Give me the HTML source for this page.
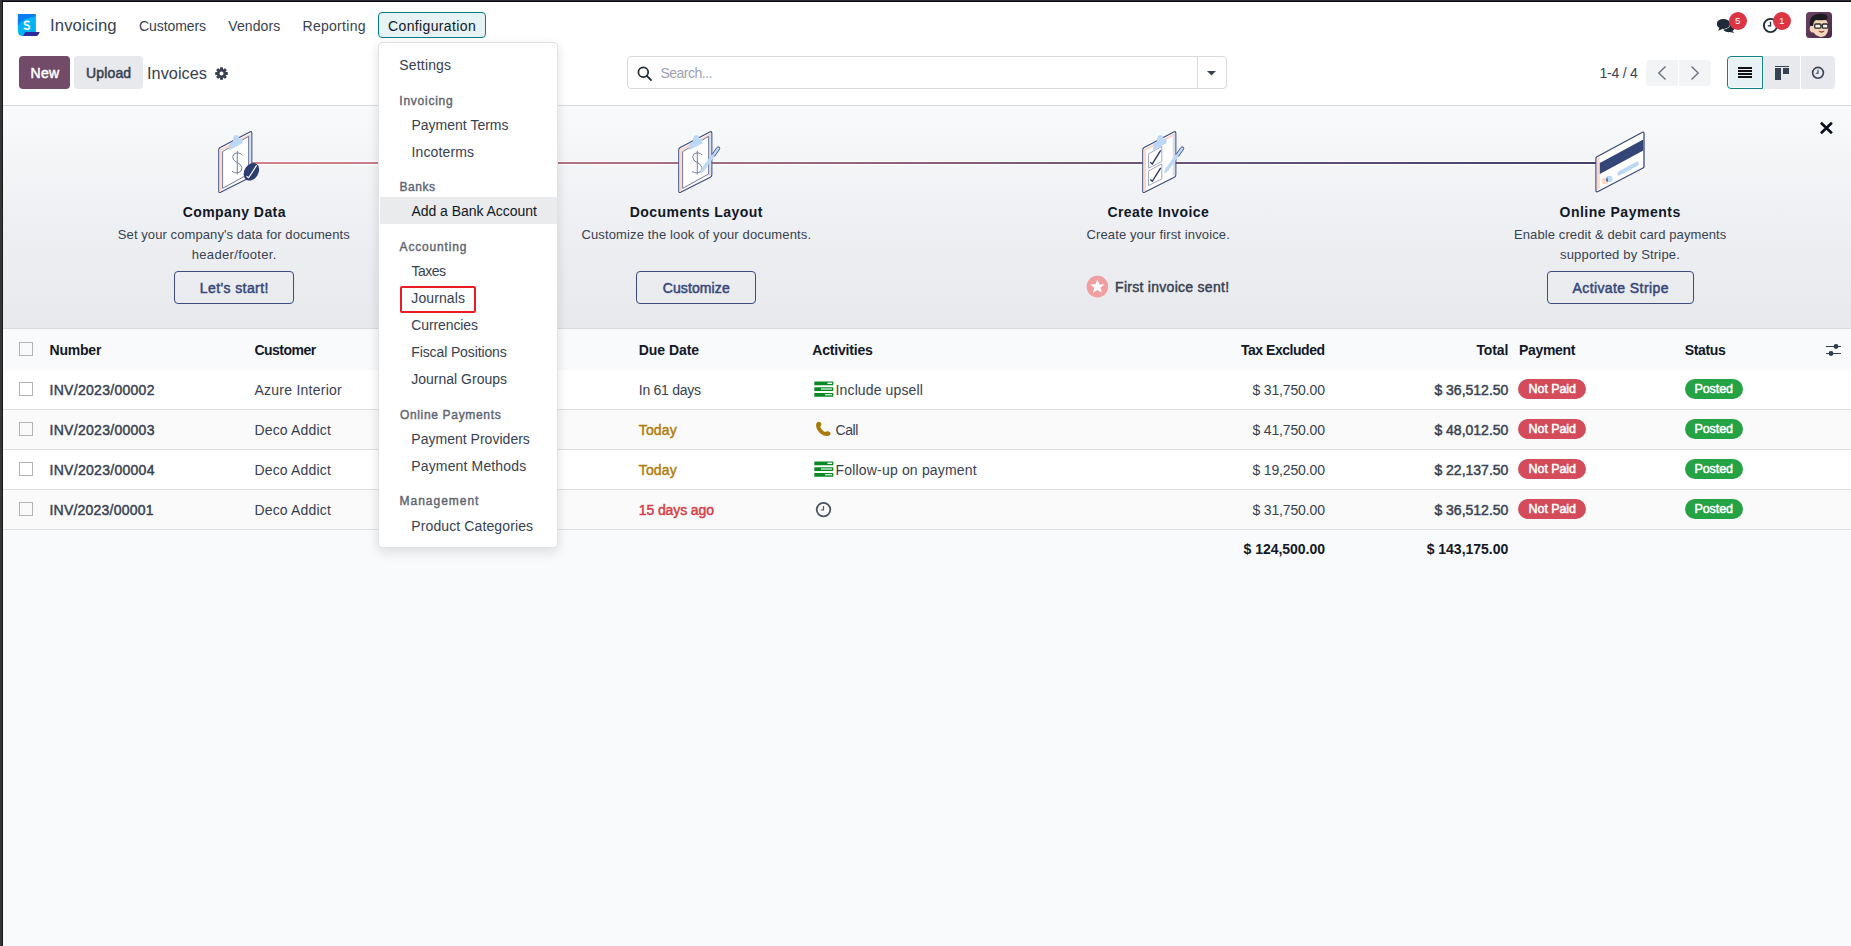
<!DOCTYPE html>
<html><head><meta charset="utf-8"><title>Invoices</title>
<style>
html,body{margin:0;padding:0;}
body{width:1851px;height:946px;overflow:hidden;position:relative;background:#f9fafb;font-family:"Liberation Sans",sans-serif;}
.t{position:absolute;white-space:nowrap;}
.b{position:absolute;}
svg.b{overflow:visible;}
</style></head><body>
<div class="b" style="left:0px;top:0px;width:1851px;height:46px;background:#fff;"></div>
<div class="b" style="left:0px;top:46px;width:1851px;height:60px;background:#fff;"></div>
<div class="b" style="left:0px;top:105px;width:1851px;height:1px;background:#d8dadd;"></div>
<div class="b" style="left:3px;top:106px;width:1848px;height:222px;background:linear-gradient(180deg,#f9fafb 0%,#eff0f3 50%,#e8e9ed 100%);"></div>
<div class="b" style="left:3px;top:328px;width:1848px;height:1px;background:#d9dbe0;"></div>
<div class="b" style="left:3px;top:329px;width:1848px;height:41px;background:#f9fafb;"></div>
<div class="b" style="left:3px;top:370px;width:1848px;height:39px;background:#ffffff;"></div>
<div class="b" style="left:3px;top:409px;width:1848px;height:1px;background:#dee0e3;"></div>
<div class="b" style="left:3px;top:410px;width:1848px;height:39px;background:#fafafa;"></div>
<div class="b" style="left:3px;top:449px;width:1848px;height:1px;background:#dee0e3;"></div>
<div class="b" style="left:3px;top:450px;width:1848px;height:39px;background:#ffffff;"></div>
<div class="b" style="left:3px;top:489px;width:1848px;height:1px;background:#dee0e3;"></div>
<div class="b" style="left:3px;top:490px;width:1848px;height:39px;background:#fafafa;"></div>
<div class="b" style="left:3px;top:529px;width:1848px;height:1px;background:#dee0e3;"></div>
<div class="b" style="left:3px;top:530px;width:1848px;height:416px;background:#f9fafb;"></div>
<svg class="b" style="left:17px;top:13px;" width="24" height="24" viewBox="0 0 24 24">
<path d="M0.9 0.9 H17.6 Q18.9 0.9 18.9 2.2 V22.9 H5.9 Q0.9 22.9 0.9 17.9 Z" fill="#00b3f4"/>
<path d="M0.9 0.9 H17.6 Q18.9 0.9 18.9 2.2 V3.2 Q7 4 0.9 12.6 Z" fill="#0a7df2"/>
<path d="M8.2 19 H22.8 L21.3 21.8 Q20.7 22.9 19.5 22.9 H6.2 Z" fill="#2e2aa0"/>
<path d="M12.6 9.1 Q11.6 8.2 10 8.3 Q7.5 8.5 7.5 10.3 Q7.6 11.7 10 12.2 Q12.6 12.8 12.6 14.2 Q12.5 16.2 9.8 16.2 Q8 16.1 6.9 15.2" fill="none" stroke="#fff" stroke-width="1.7"/>
</svg>
<div class="t" style="left:50.10px;top:15px;font-size:16.7px;line-height:21px;color:#374151;letter-spacing:0.075px;">Invoicing</div>
<div class="t" style="left:139.00px;top:17px;font-size:14px;line-height:18px;color:#374151;letter-spacing:-0.088px;">Customers</div>
<div class="t" style="left:228.30px;top:17px;font-size:14px;line-height:18px;color:#374151;letter-spacing:0.100px;">Vendors</div>
<div class="t" style="left:302.50px;top:17px;font-size:14px;line-height:18px;color:#374151;letter-spacing:0.287px;">Reporting</div>
<div class="b" style="left:378px;top:12px;width:108px;height:26px;background:#e6f2f3;border:1px solid #017e84;border-radius:4px;box-sizing:border-box;"></div>
<div class="t" style="left:388.00px;top:17px;font-size:14px;line-height:18px;color:#111827;letter-spacing:0.367px;">Configuration</div>
<svg class="b" style="left:1712px;top:10px;" width="26" height="26" viewBox="0 0 26 26">
<ellipse cx="16.5" cy="17.6" rx="6.2" ry="4.6" fill="#1f2937"/>
<path d="M19.5 20 L22.2 23 L15.5 21.6 Z" fill="#1f2937"/>
<ellipse cx="11.4" cy="13.9" rx="7.1" ry="5.5" fill="#fff"/>
<path d="M6.5 17.2 L5.2 21.6 L12.5 19.3 Z" fill="#fff"/>
<ellipse cx="11.4" cy="13.9" rx="6.6" ry="5" fill="#1f2937"/>
<path d="M7.5 17.5 L6.2 20.8 L11.2 18.7 Z" fill="#1f2937"/>
</svg>
<div class="b" style="left:1729px;top:12px;width:18px;height:18px;background:#dc3545;border-radius:50%;"></div>
<div class="t" style="left:1734.95px;top:14px;font-size:9.8px;line-height:13px;color:#fff;">5</div>
<svg class="b" style="left:1762px;top:17px;" width="17" height="17" viewBox="0 0 17 17">
<circle cx="8.5" cy="8.5" r="6.6" fill="none" stroke="#1f2937" stroke-width="1.9"/>
<path d="M8.5 4.8 V8.8 H5.8" fill="none" stroke="#1f2937" stroke-width="1.3"/>
</svg>
<div class="b" style="left:1773px;top:12px;width:18px;height:18px;background:#dc3545;border-radius:50%;"></div>
<div class="t" style="left:1778.95px;top:14px;font-size:9.8px;line-height:13px;color:#fff;">1</div>
<svg class="b" style="left:1806px;top:12px;" width="26" height="26" viewBox="0 0 26 26">
<defs><linearGradient id="av" x1="0" y1="0" x2="1" y2="1"><stop offset="0" stop-color="#6b4265"/><stop offset="1" stop-color="#4a2a46"/></linearGradient></defs>
<rect x="0" y="0" width="26" height="26" rx="3.5" fill="url(#av)"/>
<path d="M7 9 Q13 6.5 20.5 8.5 Q22.8 12 22.3 16 Q22.5 20 19.5 23.5 Q16.5 25.5 13.5 24.8 Q9.5 23.8 7.5 20.5 Q5.5 21 4.2 19 Q3.2 16.5 4.2 14.5 Q5.3 13.2 6.8 14.3 Z" fill="#f5d5b8"/>
<path d="M3.6 12.5 Q3.2 6 8 3 Q13 0.6 18.5 2 Q21.8 3 21.6 5.5 Q21 8.5 18.5 8 Q13 8.6 10 8 Q7.5 9 7 14 L5.6 14 Q4 13.8 3.6 12.5 Z" fill="#1d1d21"/>
<rect x="8.7" y="12" width="6.2" height="4.2" rx="1" fill="#f4efe8" stroke="#2a2a2a" stroke-width="1.3"/>
<rect x="16.4" y="12" width="5.5" height="4.2" rx="1" fill="#f4efe8" stroke="#2a2a2a" stroke-width="1.3"/>
<path d="M14.9 13.5 H16.4" stroke="#2a2a2a" stroke-width="1"/>
<path d="M12.8 19.2 Q15.5 21.8 18.2 19.2 Q15.5 20 12.8 19.2 Z" fill="#a9474a" stroke="#8a3a3a" stroke-width="0.6"/>
</svg>
<div class="b" style="left:19px;top:56px;width:51px;height:33px;background:#714b67;border-radius:4px;"></div>
<div class="t" style="left:30.60px;top:64px;font-size:14px;line-height:18px;color:#fff;-webkit-text-stroke:0.5px #fff;letter-spacing:0.200px;">New</div>
<div class="b" style="left:74px;top:56px;width:69px;height:33px;background:#e7e9ed;border-radius:4px;"></div>
<div class="t" style="left:85.90px;top:64px;font-size:14px;line-height:18px;color:#374151;-webkit-text-stroke:0.5px #374151;letter-spacing:0.180px;">Upload</div>
<div class="t" style="left:147.00px;top:63px;font-size:16.3px;line-height:20px;color:#374151;letter-spacing:0.029px;">Invoices</div>
<svg class="b" style="left:215px;top:66.5px;" width="13" height="13" viewBox="0 0 13 13">
<g transform="translate(6.5 6.5)" fill="#374151">
<circle r="4.6"/>
<rect x="-1.5" y="-6.3" width="3" height="12.6" rx="0.6"/>
<rect x="-1.5" y="-6.3" width="3" height="12.6" rx="0.6" transform="rotate(45)"/>
<rect x="-1.5" y="-6.3" width="3" height="12.6" rx="0.6" transform="rotate(90)"/>
<rect x="-1.5" y="-6.3" width="3" height="12.6" rx="0.6" transform="rotate(135)"/>
</g>
<circle cx="6.5" cy="6.5" r="2" fill="#fff"/>
</svg>
<div class="b" style="left:627px;top:56px;width:600px;height:33px;background:#fff;border:1px solid #d8dadd;border-radius:4px;box-sizing:border-box;"></div>
<div class="b" style="left:1197px;top:57px;width:1px;height:31px;background:#d8dadd;"></div>
<svg class="b" style="left:637px;top:65.5px;" width="16" height="16" viewBox="0 0 16 16">
<circle cx="6.3" cy="6.3" r="4.9" fill="none" stroke="#1f2937" stroke-width="1.7"/>
<path d="M9.8 9.8 L14 14" stroke="#1f2937" stroke-width="1.8" stroke-linecap="round"/>
</svg>
<div class="t" style="left:660.50px;top:64px;font-size:14px;line-height:18px;color:#9ca3af;letter-spacing:-0.513px;">Search...</div>
<svg class="b" style="left:1206px;top:70px;" width="11" height="6" viewBox="0 0 11 6"><path d="M1 1 H10 L5.5 5.5 Z" fill="#374151"/></svg>
<div class="t" style="left:1599.50px;top:64px;font-size:14px;line-height:18px;color:#374151;letter-spacing:-0.233px;">1-4 / 4</div>
<div class="b" style="left:1646px;top:60px;width:32px;height:26px;background:#f3f4f6;border-radius:4px 0 0 4px;"></div>
<div class="b" style="left:1679px;top:60px;width:32px;height:26px;background:#f3f4f6;border-radius:0 4px 4px 0;"></div>
<svg class="b" style="left:1656px;top:65px;" width="12" height="16" viewBox="0 0 12 16"><path d="M9.5 1.5 L2.8 8 L9.5 14.5" fill="none" stroke="#6b7280" stroke-width="1.4"/></svg>
<svg class="b" style="left:1689px;top:65px;" width="12" height="16" viewBox="0 0 12 16"><path d="M2.5 1.5 L9.2 8 L2.5 14.5" fill="none" stroke="#6b7280" stroke-width="1.4"/></svg>
<div class="b" style="left:1727px;top:56px;width:36px;height:33px;background:#e6f2f3;border:1px solid #0b8389;border-radius:4px 0 0 4px;box-sizing:border-box;box-shadow:inset 0 0 0 1px #f4fafa;"></div>
<div class="b" style="left:1764px;top:56px;width:36px;height:33px;background:#e7e9ed;"></div>
<div class="b" style="left:1801px;top:56px;width:34px;height:33px;background:#e7e9ed;border-radius:0 4px 4px 0;"></div>
<svg class="b" style="left:1738px;top:66px;" width="14" height="13" viewBox="0 0 14 13">
<rect x="0" y="1" width="14" height="2" fill="#111"/>
<rect x="0" y="4" width="14" height="2" fill="#111"/>
<rect x="0" y="7" width="14" height="2" fill="#111"/>
<rect x="0" y="10" width="14" height="2" fill="#111"/>
</svg>
<svg class="b" style="left:1775px;top:66px;" width="15" height="14" viewBox="0 0 15 14">
<rect x="0" y="0" width="14" height="1" fill="#374151"/>
<rect x="0" y="2" width="6" height="12" fill="#374151"/>
<rect x="8" y="2" width="6" height="6" fill="#374151"/>
</svg>
<svg class="b" style="left:1811px;top:66px;" width="14" height="14" viewBox="0 0 14 14">
<circle cx="7" cy="6.8" r="5.4" fill="none" stroke="#374151" stroke-width="1.6"/>
<path d="M7 3.8 V7.2 H4.8" fill="none" stroke="#374151" stroke-width="1.1"/>
</svg>
<div class="b" style="left:234px;top:161px;width:1386px;height:4px;background:linear-gradient(90deg,#d5838a 0%,#a56a80 35%,#6e5478 65%,#3f416a 100%);border-top:1px solid #fff;border-bottom:1px solid #fff;box-sizing:border-box;"></div>
<svg class="b" style="left:218px;top:130px;" width="46" height="64" viewBox="0 0 46 64">
<path d="M0.8 19.6 Q0.8 18.1 2.2 17.4 L31.8 1.9 Q33.8 0.9 33.8 3.1 V45 Q33.8 46.5 32.3 47.3 L2.6 62.3 Q0.8 63.1 0.8 61.1 Z" fill="#fff" stroke="#3b4a7e" stroke-width="1.15"/>
<path d="M1.4 19.6 L32.6 3.3 V5.6 L4 20.6 V60.6 L1.4 61.9 Z" fill="#fcd8c8"/>
<path d="M30.6 4.6 L33.2 3.3 V45 L30.6 46.3 Z" fill="#d9deeb"/>
<path d="M4.6 21.6 L30.6 6.4 V44 L4.6 58.4 Z" fill="#fff" stroke="#56628f" stroke-width="0.85"/>
<path d="M11.1 20.2 L24.5 13.2 V10 Q24.5 8 22.6 8.7 L21.3 9.2 Q21.4 5.4 18.6 4.9 Q15.8 4.8 15.2 8.2 L15 11.6 L13 12.6 Q11.1 13.6 11.1 15.6 Z" fill="#bcd8f5"/>
<path d="M24.3 25 Q20.3 21.4 16 24 Q13.3 26.7 15.9 30.2 Q18.8 32.5 22.1 34.4 Q25.3 37.5 23.1 41 Q19 44.5 14 41.4" fill="none" stroke="#6f78a0" stroke-width="0.95"/><path d="M19.3 21 V44.5" stroke="#6f78a0" stroke-width="0.95"/><g transform="translate(33.4 41.8) rotate(32)"><ellipse cx="0" cy="0" rx="7" ry="9.4" fill="#2e3d70"/></g><path d="M28.6 46.3 L30.6 47.7 L38.6 35.4" fill="none" stroke="#fff" stroke-width="1.15"/></svg>
<svg class="b" style="left:677.5px;top:130px;" width="46" height="64" viewBox="0 0 46 64">
<path d="M0.8 19.6 Q0.8 18.1 2.2 17.4 L31.8 1.9 Q33.8 0.9 33.8 3.1 V45 Q33.8 46.5 32.3 47.3 L2.6 62.3 Q0.8 63.1 0.8 61.1 Z" fill="#fff" stroke="#3b4a7e" stroke-width="1.15"/>
<path d="M1.4 19.6 L32.6 3.3 V5.6 L4 20.6 V60.6 L1.4 61.9 Z" fill="#fcd8c8"/>
<path d="M30.6 4.6 L33.2 3.3 V45 L30.6 46.3 Z" fill="#d9deeb"/>
<path d="M4.6 21.6 L30.6 6.4 V44 L4.6 58.4 Z" fill="#fff" stroke="#56628f" stroke-width="0.85"/>
<path d="M11.1 20.2 L24.5 13.2 V10 Q24.5 8 22.6 8.7 L21.3 9.2 Q21.4 5.4 18.6 4.9 Q15.8 4.8 15.2 8.2 L15 11.6 L13 12.6 Q11.1 13.6 11.1 15.6 Z" fill="#bcd8f5"/>
<path d="M24.3 25 Q20.3 21.4 16 24 Q13.3 26.7 15.9 30.2 Q18.8 32.5 22.1 34.4 Q25.3 37.5 23.1 41 Q19 44.5 14 41.4" fill="none" stroke="#6f78a0" stroke-width="0.95"/><path d="M19.3 21 V44.5" stroke="#6f78a0" stroke-width="0.95"/><path d="M21.8 43.6 L23 39.3 L38.5 17.9 Q40 16.1 41.3 17.1 Q42.4 18.3 41 20.1 L25.9 41.3 Z" fill="#bcd8f5"/><path d="M34 24.6 L38.5 17.9 Q40 16.1 41.3 17.1 Q42.4 18.3 41 20.1 L36.3 26.6" fill="none" stroke="#3b4a7e" stroke-width="0.9"/></svg>
<svg class="b" style="left:1141.7px;top:130px;" width="46" height="64" viewBox="0 0 46 64">
<path d="M0.8 19.6 Q0.8 18.1 2.2 17.4 L31.8 1.9 Q33.8 0.9 33.8 3.1 V45 Q33.8 46.5 32.3 47.3 L2.6 62.3 Q0.8 63.1 0.8 61.1 Z" fill="#fff" stroke="#3b4a7e" stroke-width="1.15"/>
<path d="M1.4 19.6 L32.6 3.3 V5.6 L4 20.6 V60.6 L1.4 61.9 Z" fill="#fcd8c8"/>
<path d="M30.6 4.6 L33.2 3.3 V45 L30.6 46.3 Z" fill="#d9deeb"/>

<path d="M11.1 20.2 L24.5 13.2 V10 Q24.5 8 22.6 8.7 L21.3 9.2 Q21.4 5.4 18.6 4.9 Q15.8 4.8 15.2 8.2 L15 11.6 L13 12.6 Q11.1 13.6 11.1 15.6 Z" fill="#bcd8f5"/>

<path d="M6.5 23.9 L19.8 16.4 V31.5 L6.5 38.2 Z" fill="none" stroke="#8a93b3" stroke-width="0.8"/>
<path d="M6.5 41 L19.8 33.8 V48.9 L6.5 55.6 Z" fill="none" stroke="#8a93b3" stroke-width="0.8"/>
<path d="M8.3 32.2 L10.3 33.9 L18.7 20.4" fill="none" stroke="#2a3768" stroke-width="1.35"/>
<path d="M8.3 49.6 L10.3 51.3 L18.7 37.8" fill="none" stroke="#2a3768" stroke-width="1.35"/>
<path d="M21.8 43.6 L23 39.3 L38.5 17.9 Q40 16.1 41.3 17.1 Q42.4 18.3 41 20.1 L25.9 41.3 Z" fill="#bcd8f5"/><path d="M34 24.6 L38.5 17.9 Q40 16.1 41.3 17.1 Q42.4 18.3 41 20.1 L36.3 26.6" fill="none" stroke="#3b4a7e" stroke-width="0.9"/></svg>
<svg class="b" style="left:1595px;top:131px;" width="50" height="62" viewBox="0 0 50 62">
<path d="M1.5 26 L47 1.5 Q49 0.5 49 2.5 V35.5 Q49 36.5 48 37 L3 60.5 Q1 61.5 1 59.5 V27.5 Q1 26.5 1.5 26 Z" fill="#fff" stroke="#3b4a7e" stroke-width="1.3"/>
<path d="M1.7 27 V59.5 L4.8 57.8 V25.5 Z" fill="#fcd8c8"/>
<path d="M4.8 32 L48.3 8.5 V19.5 L4.8 43 Z" fill="#344577"/>
<path d="M24.5 39.8 L41.5 30.8 Q44 29.8 44 32.5 Q44 34.2 42 35.2 L25 44.2 Q22.3 45.5 22.3 42.8 Q22.3 41 24.5 39.8 Z" fill="#bcd8f5"/>
<circle cx="10" cy="50" r="3.3" fill="#fcd8c8"/>
<circle cx="14.3" cy="48" r="3.3" fill="#bcd8f5"/>
<path d="M12 46 Q10.8 48.5 12.2 51.5 Q13.2 49 12 46 Z" fill="#1f2a55"/>
</svg>
<svg class="b" style="left:1819px;top:121px;" width="15" height="15" viewBox="0 0 15 15"><path d="M1.9 1.7 L12.9 12.3 M12.9 1.7 L1.9 12.3" stroke="#0b0f1a" stroke-width="2.6"/></svg>
<div class="t" style="left:182.70px;top:203px;font-size:14px;line-height:18px;color:#111827;font-weight:700;letter-spacing:0.436px;">Company Data</div>
<div class="t" style="left:117.80px;top:226px;font-size:13px;line-height:17px;color:#374151;letter-spacing:0.089px;">Set your company&#x27;s data for documents</div>
<div class="t" style="left:191.70px;top:246px;font-size:13px;line-height:17px;color:#374151;letter-spacing:0.346px;">header/footer.</div>
<div class="b" style="left:174px;top:271px;width:120px;height:33px;border:1px solid #3d4c7f;border-radius:4px;box-sizing:border-box;"></div>
<div class="t" style="left:199.80px;top:279px;font-size:14px;line-height:18px;color:#36477a;-webkit-text-stroke:0.5px #36477a;letter-spacing:0.400px;">Let&#x27;s start!</div>
<div class="t" style="left:629.80px;top:203px;font-size:14px;line-height:18px;color:#111827;font-weight:700;letter-spacing:0.433px;">Documents Layout</div>
<div class="t" style="left:581.40px;top:226px;font-size:13px;line-height:17px;color:#374151;letter-spacing:0.136px;">Customize the look of your documents.</div>
<div class="b" style="left:636px;top:271px;width:120px;height:33px;border:1px solid #3d4c7f;border-radius:4px;box-sizing:border-box;"></div>
<div class="t" style="left:662.70px;top:279px;font-size:14px;line-height:18px;color:#36477a;-webkit-text-stroke:0.5px #36477a;letter-spacing:0.113px;">Customize</div>
<div class="t" style="left:1107.40px;top:203px;font-size:14px;line-height:18px;color:#111827;font-weight:700;letter-spacing:0.438px;">Create Invoice</div>
<div class="t" style="left:1086.50px;top:226px;font-size:13px;line-height:17px;color:#374151;letter-spacing:0.124px;">Create your first invoice.</div>
<svg class="b" style="left:1086px;top:275px;" width="23" height="23" viewBox="0 0 23 23">
<circle cx="11.4" cy="11.6" r="10.8" fill="#f19ea0"/>
<path d="M11.4 4.2 L13.3 9.2 L18.6 9.4 L14.4 12.7 L15.9 17.8 L11.4 14.9 L6.9 17.8 L8.4 12.7 L4.2 9.4 L9.5 9.2 Z" fill="#fff"/>
</svg>
<div class="t" style="left:1115.10px;top:278px;font-size:14px;line-height:18px;color:#374151;-webkit-text-stroke:0.45px #374151;letter-spacing:0.278px;">First invoice sent!</div>
<div class="t" style="left:1559.50px;top:203px;font-size:14px;line-height:18px;color:#111827;font-weight:700;letter-spacing:0.507px;">Online Payments</div>
<div class="t" style="left:1514.00px;top:226px;font-size:13px;line-height:17px;color:#374151;letter-spacing:0.103px;">Enable credit &amp; debit card payments</div>
<div class="t" style="left:1560.00px;top:246px;font-size:13px;line-height:17px;color:#374151;letter-spacing:0.184px;">supported by Stripe.</div>
<div class="b" style="left:1547px;top:271px;width:147px;height:33px;border:1px solid #3d4c7f;border-radius:4px;box-sizing:border-box;"></div>
<div class="t" style="left:1572.50px;top:279px;font-size:14px;line-height:18px;color:#36477a;-webkit-text-stroke:0.5px #36477a;letter-spacing:0.407px;">Activate Stripe</div>
<div class="b" style="left:19px;top:342px;width:14px;height:14px;border:1px solid #b3b3b3;box-sizing:border-box;"></div>
<div class="t" style="left:49.50px;top:341px;font-size:14px;line-height:18px;color:#111827;font-weight:700;letter-spacing:-0.200px;">Number</div>
<div class="t" style="left:254.40px;top:341px;font-size:14px;line-height:18px;color:#111827;font-weight:700;letter-spacing:-0.514px;">Customer</div>
<div class="t" style="left:638.80px;top:341px;font-size:14px;line-height:18px;color:#111827;font-weight:700;letter-spacing:-0.057px;">Due Date</div>
<div class="t" style="left:812.30px;top:341px;font-size:14px;line-height:18px;color:#111827;font-weight:700;letter-spacing:-0.189px;">Activities</div>
<div class="t" style="left:1241.00px;top:341px;font-size:14px;line-height:18px;color:#111827;font-weight:700;letter-spacing:-0.473px;">Tax Excluded</div>
<div class="t" style="left:1476.40px;top:341px;font-size:14px;line-height:18px;color:#111827;font-weight:700;letter-spacing:-0.100px;">Total</div>
<div class="t" style="left:1519.00px;top:341px;font-size:14px;line-height:18px;color:#111827;font-weight:700;letter-spacing:-0.333px;">Payment</div>
<div class="t" style="left:1684.70px;top:341px;font-size:14px;line-height:18px;color:#111827;font-weight:700;letter-spacing:-0.360px;">Status</div>
<svg class="b" style="left:1825px;top:343px;" width="17" height="14" viewBox="0 0 17 14">
<path d="M1.1 3.5 H15.9 M1.1 10.5 H15.9" stroke="#2f3a4a" stroke-width="1.2"/>
<circle cx="11" cy="3.5" r="2.4" fill="#2f3a4a"/>
<circle cx="6" cy="10.5" r="2.4" fill="#2f3a4a"/>
</svg>
<div class="b" style="left:19px;top:382px;width:14px;height:14px;border:1px solid #b3b3b3;box-sizing:border-box;"></div>
<div class="t" style="left:49.50px;top:381px;font-size:14px;line-height:18px;color:#374151;-webkit-text-stroke:0.45px #374151;letter-spacing:0.292px;">INV/2023/00002</div>
<div class="t" style="left:254.40px;top:381px;font-size:14px;line-height:18px;color:#374151;letter-spacing:0.254px;">Azure Interior</div>
<div class="t" style="left:638.80px;top:381px;font-size:14px;line-height:18px;color:#374151;letter-spacing:-0.267px;">In 61 days</div>
<svg class="b" style="left:814px;top:381px;" width="20" height="16" viewBox="0 0 20 16">
<rect x="0.3" y="0.5" width="19" height="3.8" rx="0.5" fill="#0b8a24"/>
<rect x="0.3" y="6.2" width="19" height="3.8" rx="0.5" fill="#0b8a24"/>
<rect x="0.3" y="11.9" width="19" height="3.8" rx="0.5" fill="#0b8a24"/>
<rect x="13.5" y="1.6" width="4.5" height="1.4" fill="#fff"/>
<rect x="7" y="7.3" width="11" height="1.4" fill="#cfe6d2"/>
<rect x="11" y="13" width="7" height="1.4" fill="#cfe6d2"/>
</svg>
<div class="t" style="left:835.60px;top:381px;font-size:14px;line-height:18px;color:#374151;letter-spacing:0.123px;">Include upsell</div>
<div class="t" style="left:1252.40px;top:381px;font-size:14px;line-height:18px;color:#374151;letter-spacing:-0.140px;">$ 31,750.00</div>
<div class="t" style="left:1434.40px;top:381px;font-size:14px;line-height:18px;color:#374151;-webkit-text-stroke:0.45px #374151;">$ 36,512.50</div>
<div class="b" style="left:1518px;top:379px;width:68px;height:20px;background:#d44c59;border-radius:10px;"></div>
<div class="t" style="left:1528.60px;top:381px;font-size:12.5px;line-height:16px;color:#fff;-webkit-text-stroke:0.5px #fff;letter-spacing:-0.086px;">Not Paid</div>
<div class="b" style="left:1685px;top:379px;width:58px;height:20px;background:#25a244;border-radius:10px;"></div>
<div class="t" style="left:1694.40px;top:381px;font-size:12.5px;line-height:16px;color:#fff;-webkit-text-stroke:0.5px #fff;letter-spacing:-0.060px;">Posted</div>
<div class="b" style="left:19px;top:422px;width:14px;height:14px;border:1px solid #b3b3b3;box-sizing:border-box;"></div>
<div class="t" style="left:49.50px;top:421px;font-size:14px;line-height:18px;color:#374151;-webkit-text-stroke:0.45px #374151;letter-spacing:0.292px;">INV/2023/00003</div>
<div class="t" style="left:254.40px;top:421px;font-size:14px;line-height:18px;color:#374151;letter-spacing:0.180px;">Deco Addict</div>
<div class="t" style="left:638.80px;top:421px;font-size:14px;line-height:18px;color:#b07d0c;-webkit-text-stroke:0.45px #b07d0c;letter-spacing:0.125px;">Today</div>
<svg class="b" style="left:815px;top:421px;" width="17" height="16" viewBox="0 0 17 16">
<path d="M3.2 0.8 Q1 1.5 1 4.5 Q1.5 9 5.5 12.5 Q9.5 15.5 13 15 Q15.8 14.5 15.6 12.6 Q15.3 11.3 13.8 10.6 Q12.5 9.8 11.3 10.6 Q10.2 11.4 9 10.5 Q6.5 8.5 5.5 6.5 Q5 5.5 5.8 4.8 Q6.8 4 6.3 2.6 Q5.5 0.5 3.2 0.8 Z" fill="#a97a08"/>
</svg>
<div class="t" style="left:835.60px;top:421px;font-size:14px;line-height:18px;color:#374151;letter-spacing:-0.467px;">Call</div>
<div class="t" style="left:1252.40px;top:421px;font-size:14px;line-height:18px;color:#374151;letter-spacing:-0.140px;">$ 41,750.00</div>
<div class="t" style="left:1434.40px;top:421px;font-size:14px;line-height:18px;color:#374151;-webkit-text-stroke:0.45px #374151;">$ 48,012.50</div>
<div class="b" style="left:1518px;top:419px;width:68px;height:20px;background:#d44c59;border-radius:10px;"></div>
<div class="t" style="left:1528.60px;top:421px;font-size:12.5px;line-height:16px;color:#fff;-webkit-text-stroke:0.5px #fff;letter-spacing:-0.086px;">Not Paid</div>
<div class="b" style="left:1685px;top:419px;width:58px;height:20px;background:#25a244;border-radius:10px;"></div>
<div class="t" style="left:1694.40px;top:421px;font-size:12.5px;line-height:16px;color:#fff;-webkit-text-stroke:0.5px #fff;letter-spacing:-0.060px;">Posted</div>
<div class="b" style="left:19px;top:462px;width:14px;height:14px;border:1px solid #b3b3b3;box-sizing:border-box;"></div>
<div class="t" style="left:49.50px;top:461px;font-size:14px;line-height:18px;color:#374151;-webkit-text-stroke:0.45px #374151;letter-spacing:0.292px;">INV/2023/00004</div>
<div class="t" style="left:254.40px;top:461px;font-size:14px;line-height:18px;color:#374151;letter-spacing:0.180px;">Deco Addict</div>
<div class="t" style="left:638.80px;top:461px;font-size:14px;line-height:18px;color:#b07d0c;-webkit-text-stroke:0.45px #b07d0c;letter-spacing:0.125px;">Today</div>
<svg class="b" style="left:814px;top:461px;" width="20" height="16" viewBox="0 0 20 16">
<rect x="0.3" y="0.5" width="19" height="3.8" rx="0.5" fill="#0b8a24"/>
<rect x="0.3" y="6.2" width="19" height="3.8" rx="0.5" fill="#0b8a24"/>
<rect x="0.3" y="11.9" width="19" height="3.8" rx="0.5" fill="#0b8a24"/>
<rect x="13.5" y="1.6" width="4.5" height="1.4" fill="#fff"/>
<rect x="7" y="7.3" width="11" height="1.4" fill="#cfe6d2"/>
<rect x="11" y="13" width="7" height="1.4" fill="#cfe6d2"/>
</svg>
<div class="t" style="left:835.60px;top:461px;font-size:14px;line-height:18px;color:#374151;letter-spacing:0.174px;">Follow-up on payment</div>
<div class="t" style="left:1252.40px;top:461px;font-size:14px;line-height:18px;color:#374151;letter-spacing:-0.140px;">$ 19,250.00</div>
<div class="t" style="left:1434.40px;top:461px;font-size:14px;line-height:18px;color:#374151;-webkit-text-stroke:0.45px #374151;">$ 22,137.50</div>
<div class="b" style="left:1518px;top:459px;width:68px;height:20px;background:#d44c59;border-radius:10px;"></div>
<div class="t" style="left:1528.60px;top:461px;font-size:12.5px;line-height:16px;color:#fff;-webkit-text-stroke:0.5px #fff;letter-spacing:-0.086px;">Not Paid</div>
<div class="b" style="left:1685px;top:459px;width:58px;height:20px;background:#25a244;border-radius:10px;"></div>
<div class="t" style="left:1694.40px;top:461px;font-size:12.5px;line-height:16px;color:#fff;-webkit-text-stroke:0.5px #fff;letter-spacing:-0.060px;">Posted</div>
<div class="b" style="left:19px;top:502px;width:14px;height:14px;border:1px solid #b3b3b3;box-sizing:border-box;"></div>
<div class="t" style="left:49.50px;top:501px;font-size:14px;line-height:18px;color:#374151;-webkit-text-stroke:0.45px #374151;letter-spacing:0.215px;">INV/2023/00001</div>
<div class="t" style="left:254.40px;top:501px;font-size:14px;line-height:18px;color:#374151;letter-spacing:0.180px;">Deco Addict</div>
<div class="t" style="left:638.80px;top:501px;font-size:14px;line-height:18px;color:#d63b46;-webkit-text-stroke:0.45px #d63b46;letter-spacing:-0.110px;">15 days ago</div>
<svg class="b" style="left:815px;top:501px;" width="17" height="17" viewBox="0 0 17 17">
<circle cx="8.5" cy="8.6" r="6.8" fill="none" stroke="#4b5563" stroke-width="1.8"/>
<path d="M8.5 5 V9 H5.8" fill="none" stroke="#4b5563" stroke-width="1.2"/>
</svg>
<div class="t" style="left:1252.40px;top:501px;font-size:14px;line-height:18px;color:#374151;letter-spacing:-0.140px;">$ 31,750.00</div>
<div class="t" style="left:1434.40px;top:501px;font-size:14px;line-height:18px;color:#374151;-webkit-text-stroke:0.45px #374151;">$ 36,512.50</div>
<div class="b" style="left:1518px;top:499px;width:68px;height:20px;background:#d44c59;border-radius:10px;"></div>
<div class="t" style="left:1528.60px;top:501px;font-size:12.5px;line-height:16px;color:#fff;-webkit-text-stroke:0.5px #fff;letter-spacing:-0.086px;">Not Paid</div>
<div class="b" style="left:1685px;top:499px;width:58px;height:20px;background:#25a244;border-radius:10px;"></div>
<div class="t" style="left:1694.40px;top:501px;font-size:12.5px;line-height:16px;color:#fff;-webkit-text-stroke:0.5px #fff;letter-spacing:-0.060px;">Posted</div>
<div class="t" style="left:1243.50px;top:540px;font-size:14px;line-height:18px;color:#111827;font-weight:700;letter-spacing:-0.018px;">$ 124,500.00</div>
<div class="t" style="left:1426.70px;top:540px;font-size:14px;line-height:18px;color:#111827;font-weight:700;letter-spacing:-0.018px;">$ 143,175.00</div>
<div class="b" style="left:378px;top:42px;width:179.5px;height:505.5px;background:#fff;border:1px solid #dfe1e5;border-radius:4px;box-sizing:border-box;box-shadow:0 4px 12px rgba(0,0,0,.12);"></div>
<div class="b" style="left:379.5px;top:197px;width:177px;height:27px;background:#eaebed;"></div>
<div class="t" style="left:399.30px;top:56px;font-size:14px;line-height:18px;color:#374151;letter-spacing:0.171px;">Settings</div>
<div class="t" style="left:399.30px;top:93px;font-size:12px;line-height:16px;color:#5f6571;-webkit-text-stroke:0.4px #5f6571;letter-spacing:0.750px;">Invoicing</div>
<div class="t" style="left:411.50px;top:116px;font-size:14px;line-height:18px;color:#374151;">Payment Terms</div>
<div class="t" style="left:411.50px;top:143px;font-size:14px;line-height:18px;color:#374151;letter-spacing:0.138px;">Incoterms</div>
<div class="t" style="left:399.60px;top:179px;font-size:12px;line-height:16px;color:#5f6571;-webkit-text-stroke:0.4px #5f6571;letter-spacing:0.500px;">Banks</div>
<div class="t" style="left:411.50px;top:202px;font-size:14px;line-height:18px;color:#111827;letter-spacing:-0.047px;">Add a Bank Account</div>
<div class="t" style="left:399.60px;top:239px;font-size:12px;line-height:16px;color:#5f6571;-webkit-text-stroke:0.4px #5f6571;letter-spacing:0.833px;">Accounting</div>
<div class="t" style="left:411.50px;top:262px;font-size:14px;line-height:18px;color:#374151;letter-spacing:-0.525px;">Taxes</div>
<div class="t" style="left:411.30px;top:289px;font-size:14px;line-height:18px;color:#374151;letter-spacing:0.100px;">Journals</div>
<div class="t" style="left:411.30px;top:316px;font-size:14px;line-height:18px;color:#374151;letter-spacing:-0.111px;">Currencies</div>
<div class="t" style="left:411.30px;top:343px;font-size:14px;line-height:18px;color:#374151;letter-spacing:-0.120px;">Fiscal Positions</div>
<div class="t" style="left:411.30px;top:370px;font-size:14px;line-height:18px;color:#374151;">Journal Groups</div>
<div class="t" style="left:399.90px;top:407px;font-size:12px;line-height:16px;color:#5f6571;-webkit-text-stroke:0.4px #5f6571;letter-spacing:0.671px;">Online Payments</div>
<div class="t" style="left:411.30px;top:430px;font-size:14px;line-height:18px;color:#374151;letter-spacing:0.019px;">Payment Providers</div>
<div class="t" style="left:411.30px;top:457px;font-size:14px;line-height:18px;color:#374151;letter-spacing:0.143px;">Payment Methods</div>
<div class="t" style="left:399.60px;top:493px;font-size:12px;line-height:16px;color:#5f6571;-webkit-text-stroke:0.4px #5f6571;letter-spacing:0.978px;">Management</div>
<div class="t" style="left:411.30px;top:517px;font-size:14px;line-height:18px;color:#374151;letter-spacing:0.112px;">Product Categories</div>
<div class="b" style="left:400px;top:286px;width:76px;height:27px;border:2px solid #ec1c24;border-radius:2px;box-sizing:border-box;"></div>
<div class="b" style="left:3px;top:329px;width:1px;height:41px;background:#fff;"></div>
<div class="b" style="left:0px;top:0px;width:1851px;height:1px;background:#2e2c38;"></div>
<div class="b" style="left:0px;top:1px;width:1851px;height:1px;background:#060608;"></div>
<div class="b" style="left:0px;top:0px;width:2px;height:946px;background:#363636;"></div>
<div class="b" style="left:2px;top:0px;width:1px;height:946px;background:#1a1a1a;"></div>
</body></html>
